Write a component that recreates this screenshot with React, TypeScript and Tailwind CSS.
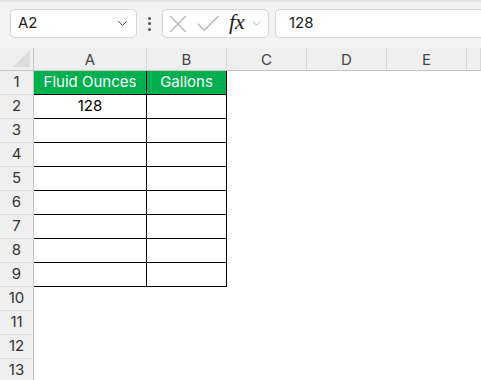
import { ChevronDown, X, Check } from "lucide-react";

const cols = [
  { key: "A", w: "w-[113px]" },
  { key: "B", w: "w-[80px]" },
  { key: "C", w: "w-[80px]" },
  { key: "D", w: "w-[80px]" },
  { key: "E", w: "w-[80px]" },
  { key: "F", w: "flex-1" },
];

const rows = [1, 2, 3, 4, 5, 6, 7, 8, 9, 10, 11, 12, 13];

function Toolbar() {
  return (
    <div className="h-[48px] bg-[#f3f3f3] flex items-start pt-[9px] border-t-[2px] border-[#e4e4e4]">
      <div className="ml-[10px] w-[127px] h-[29px] rounded-[5px] border border-[#d6d6d6] bg-white flex items-center justify-between pl-[7px] pr-[6px] -mt-[2px]">
        <span className="text-[15px] text-[#222]">A2</span>
        <ChevronDown className="h-[15px] w-[15px] text-[#444]" strokeWidth={1.6} />
      </div>
      <div className="w-[25px] h-[29px] -mt-[2px] flex flex-col items-center justify-center gap-[2.5px]">
        <span className="w-[3px] h-[3px] rounded-full bg-[#555]" />
        <span className="w-[3px] h-[3px] rounded-full bg-[#555]" />
        <span className="w-[3px] h-[3px] rounded-full bg-[#555]" />
      </div>
      <div className="w-[107px] h-[29px] -mt-[2px] rounded-[5px] border border-[#d6d6d6] bg-white flex items-center">
        <X className="h-[30px] w-[30px] text-[#b0b0b0] shrink-0" strokeWidth={0.9} />
        <Check className="h-[30px] w-[30px] text-[#b0b0b0] shrink-0" strokeWidth={0.9} />
        <span
          className="ml-[6px] text-[22px] italic text-[#222] leading-none -mt-[3px]"
          style={{ fontFamily: '"Liberation Serif", serif' }}
        >
          fx
        </span>
        <ChevronDown className="ml-[5px] h-[13px] w-[13px] text-[#999]" strokeWidth={1.4} />
      </div>
      <div className="ml-[6px] flex-1 h-[29px] -mt-[2px] rounded-l-[5px] border border-r-0 border-[#d6d6d6] bg-white flex items-center pl-[13px]">
        <span className="text-[15px] text-[#222]">128</span>
      </div>
    </div>
  );
}

function HeaderRow() {
  return (
    <div className="flex h-[23px] bg-[#efefef] border-b border-[#c4c4c4]">
      <div className="w-[34px] shrink-0 border-r border-[#c4c4c4] flex items-end justify-end pr-[3px] pb-[3px]">
        <div className="w-0 h-0 border-l-[17px] border-l-transparent border-b-[17px] border-b-[#dcdcdc]" />
      </div>
      {cols.map((c) => (
        <div
          key={c.key}
          className={`${c.w} shrink-0 flex items-center justify-center text-[15px] text-[#444] border-r border-[#d8d8d8] pt-[2px]`}
        >
          {c.key !== "F" ? c.key : ""}
        </div>
      ))}
    </div>
  );
}

function Row({ n }: { n: number }) {
  const inTable = n <= 9;
  const isHead = n === 1;
  return (
    <div className="flex h-[24px]">
      <div className="w-[34px] shrink-0 bg-[#efefef] border-r border-[#c4c4c4] border-b border-b-[#dedede] flex items-center justify-center text-[15px] text-[#333]">
        {n}
      </div>
      {inTable ? (
        <>
          <div
            className={`w-[113px] shrink-0 border-r border-b border-black flex items-center justify-center text-[15px] ${
              isHead ? "bg-[#00b050] text-white" : "bg-white text-black"
            }`}
          >
            {isHead ? "Fluid Ounces" : n === 2 ? "128" : ""}
          </div>
          <div
            className={`w-[80px] shrink-0 border-r border-b border-black flex items-center justify-center text-[15px] ${
              isHead ? "bg-[#00b050] text-white" : "bg-white"
            }`}
          >
            {isHead ? "Gallons" : ""}
          </div>
          <div className="flex-1 bg-white" />
        </>
      ) : (
        <div className="flex-1 bg-white" />
      )}
    </div>
  );
}

export default function App() {
  return (
    <div className="w-[481px] h-[380px] overflow-hidden bg-white" style={{ fontFamily: 'Inter, "Noto Sans", sans-serif' }}>
      <Toolbar />
      <HeaderRow />
      {rows.map((n) => (
        <Row key={n} n={n} />
      ))}
    </div>
  );
}
